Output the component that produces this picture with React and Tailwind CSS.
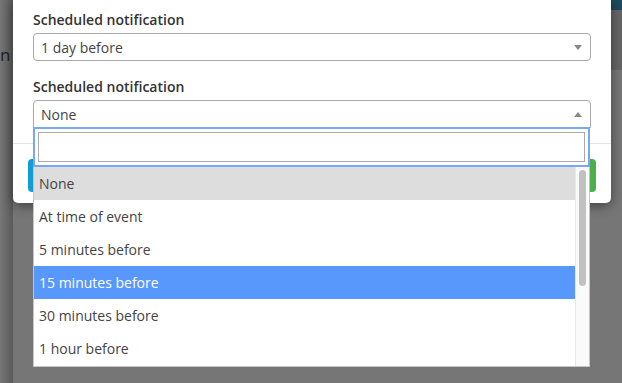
import React from "react";

const options = [
  { label: "None", state: "selected" },
  { label: "At time of event" },
  { label: "5 minutes before" },
  { label: "15 minutes before", state: "highlight" },
  { label: "30 minutes before" },
  { label: "1 hour before" },
];

export default function App() {
  return (
    <div
      className="relative w-[622px] h-[383px] overflow-hidden bg-[#767676]"
      style={{ fontFamily: '"Open Sans", "Noto Sans", sans-serif' }}
    >
      {/* page behind the backdrop */}
      <div className="absolute left-0 top-0 w-[13px] h-[383px] bg-gradient-to-r from-[#777] to-[#5a5a5a]" />
      <div className="absolute right-0 top-0 w-[11px] h-[10px] bg-[#1e4a5c]" />
      <div className="absolute right-0 top-[10px] w-[11px] h-[60px] bg-[#656565]" />

      {/* modal */}
      <div className="absolute left-[13px] top-0 w-[598px] h-[203px] bg-white rounded-b-[5px] shadow-[0_3px_12px_rgba(0,0,0,0.45)] flex flex-col">
        <div className="px-[20px] pt-[10px]">
          <div className="text-[14px] font-semibold leading-[20px] text-[#333] mb-[3px]">
            Scheduled notification
          </div>
          <div className="h-[28px] border border-[#aaa] rounded-[4px] flex items-center justify-between pl-[7px] pr-[8px] text-[14px] text-[#444]">
            <span>1 day before</span>
            <span className="w-0 h-0 border-t-[5px] border-t-[#888] border-x-[4px] border-x-transparent" />
          </div>
          <div className="mt-[16px] text-[14px] font-semibold leading-[20px] text-[#333] mb-[3px]">
            Scheduled notification
          </div>
          <div className="h-[28px] border border-[#aaa] rounded-t-[4px] flex items-center justify-between pl-[7px] pr-[8px] text-[14px] text-[#444]">
            <span>None</span>
            <span className="w-0 h-0 border-b-[5px] border-b-[#888] border-x-[4px] border-x-transparent" />
          </div>
        </div>
        <div className="mt-[15px] border-t border-[#e5e5e5] px-[15px] pt-[15px] flex justify-between">
          <div className="h-[33px] w-[90px] rounded-[4px] bg-[#139dd6]" />
          <div className="h-[33px] w-[90px] rounded-[4px] bg-[#4cae4c]" />
        </div>
      </div>

      {/* text of the page behind, peeking out at the left edge */}
      <span className="absolute left-0 top-[43px] text-[17px] leading-[24px] text-[#1c1c1c]">n</span>

      {/* dropdown */}
      <div className="absolute left-[33px] top-[127px] w-[557px] bg-white flex flex-col">
        <div className="border-2 border-[#78a7f6] p-[3px]">
          <div className="h-[30px] border border-[#aaa] bg-white" />
        </div>
        <div className="flex h-[200px] border-x border-b border-[#c6c6c6]">
          <div className="flex-1 flex flex-col">
            {options.map((o) => (
              <div
                key={o.label}
                className={
                  "h-[33px] shrink-0 flex items-center pl-[5px] text-[14px] " +
                  (o.state === "selected"
                    ? "bg-[#ddd] text-[#444]"
                    : o.state === "highlight"
                    ? "bg-[#5897fb] text-white"
                    : "text-[#444]")
                }
              >
                {o.label}
              </div>
            ))}
          </div>
          <div className="w-[14px] bg-[#fafafa] border-l border-[#e8e8e8] pt-[3px] pl-[3px]">
            <div className="w-[7px] h-[116px] rounded-full bg-[#c1c1c1]" />
          </div>
        </div>
      </div>
    </div>
  );
}
